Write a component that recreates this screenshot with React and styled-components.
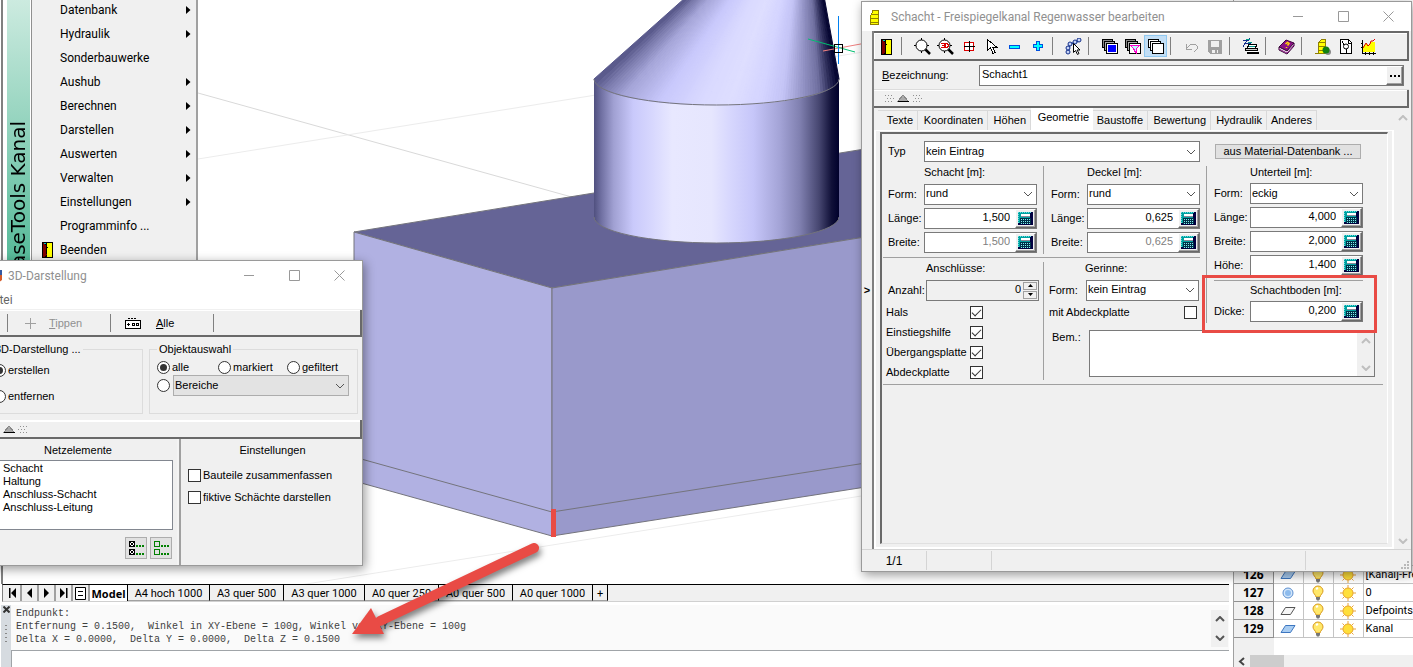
import React from "react";
import styled, { createGlobalStyle, css } from "styled-components";

const GlobalStyle = createGlobalStyle`
  *, *::before, *::after { box-sizing: border-box; }
  body { margin: 0; background: #fff; color: #000; font: 11px/13px Roboto, "Liberation Sans", sans-serif; }
  button, input, select, textarea { font: inherit; color: inherit; margin: 0; padding: 0; border-radius: 0; }
`;

const face = "#f0f0f0";
const dark = "#696969";
const edge = "#a0a0a0";
const red = "#e94b45";

/* ---------- desktop ---------- */

const Desktop = styled.div`
  position: relative;
  display: flex;
  min-height: 100vh;
  overflow: hidden;
  background: #fff;
`;

const Workspace = styled.main`
  flex: 1;
  min-width: 0;
  display: flex;
  flex-direction: column;
  padding-right: 4px;
`;

const Viewport = styled.div`
  position: relative;
  flex: 1;
  border-left: 2px solid #808080;
  margin-left: 1px;
`;

const SceneSvg = styled.svg`
  position: absolute;
  top: 0;
  left: -3px;
  width: calc(100% + 3px);
  height: 100%;
`;

const cylinderStops = [
  [0, "#50507f"], [3, "#7070a2"], [8, "#a0a0d2"], [16, "#c9c9fb"], [24, "#d8d8fe"],
  [32, "#e8e8ff"], [48, "#e6e6fe"], [55, "#d8d8fe"], [65, "#c6c6f9"], [76, "#a3a3d6"],
  [84, "#8080b0"], [92, "#45456f"], [97, "#101038"], [100, "#00002c"],
];

const coneStops = [
  [0, 85, 85, 135], [0.04, 120, 120, 170], [0.12, 165, 165, 216], [0.27, 200, 200, 252], [0.44, 218, 218, 255],
  [0.56, 222, 222, 255], [0.68, 212, 212, 255], [0.77, 196, 196, 246], [0.85, 150, 150, 200],
  [0.92, 112, 112, 160], [0.96, 50, 50, 95], [1, 0, 0, 44],
];

function coneColor(t) {
  const i = Math.max(1, coneStops.findIndex((s) => s[0] >= t));
  const [a, b] = [coneStops[i - 1], coneStops[i]];
  const k = (t - a[0]) / (b[0] - a[0]);
  const mix = (n) => Math.round(a[n] + (b[n] - a[n]) * k);
  return `rgb(${mix(1)},${mix(2)},${mix(3)})`;
}

const coneWedges = Array.from({ length: 96 }, (_, i) => {
  const point = (n) => {
    const x = 594 + (245 * n) / 96;
    const u = (x - 716.5) / 122.5;
    return [x, 79 + 26 * Math.sqrt(Math.max(0, 1 - u * u))];
  };
  const [a, b] = [point(i), point(i + 1)];
  return {
    points: `805,-109 ${a[0].toFixed(1)},${a[1].toFixed(1)} ${b[0].toFixed(1)},${b[1].toFixed(1)}`,
    color: coneColor((i + 0.5) / 96),
  };
});

function Scene() {
  return (
    <SceneSvg aria-label="3D-Ansicht Schacht">
      <defs>
        <linearGradient id="cylinder">
          {cylinderStops.map(([o, c]) => <stop key={o} offset={`${o}%`} stopColor={c} />)}
        </linearGradient>
      </defs>
      <g fill="none" stroke="#d9d9d9">
        <path d="M198 93L640 216" />
        <path d="M198 159L1000 30M300 585L1000 474" stroke="#ececec" />
      </g>
      <g stroke="#74747c">
        <path d="M354 232L1000 127V215L552 288Z" fill="#656496" />
        <path d="M354 232L552 288V536L354 481Z" fill="#b1b1e2" />
        <path d="M552 288L1000 215V466L552 536Z" fill="#9999cb" />
        <path d="M354 457L552 512L1000 442" fill="none" />
      </g>
      <path d="M594 79V217A122.500 26 0 0 0 839 217V79Z" fill="url(#cylinder)" />
      <path d="M594 217A122.500 26 0 0 0 839 217" fill="none" stroke="#74747c" />
      {coneWedges.map((w) => (
        <polygon key={w.points} points={w.points} fill={w.color} stroke={w.color} strokeWidth="1" />
      ))}
      <path d="M594 79A122.500 26 0 0 0 839 79" fill="none" stroke="#74747c" />
      <path d="M823 51L866 43" stroke="#f08080" />
      <path d="M808 39L855 52" stroke="#00c070" />
      <path d="M838.500 16V64" stroke="#0080f0" />
      <rect x="834.500" y="44.500" width="8" height="8" fill="none" stroke="#000" />
      <rect x="551" y="509" width="5" height="28" fill={red} />
    </SceneSvg>
  );
}

/* ---------- layout tabs and command line ---------- */

const SheetBar = styled.div`
  display: flex;
  height: 18px;
  margin: 0 0 3px 2px;
  padding-left: 2px;
  border-left: 1px solid #808080;
  border-top: 1px solid #000;
  border-bottom: 1px solid #d0d0d0;
  background: ${face};
`;

const SheetNav = styled.button`
  display: grid;
  place-items: center;
  width: 17px;
  border: 0;
  border-right: 2px solid ${edge};
  background: ${face};
`;

const SheetTab = styled.button`
  width: ${(p) => p.$w}px;
  padding-top: 2px;
  border: 0;
  border-right: 1px solid #000;
  border-bottom: 1px solid ${edge};
  background: ${face};
  text-align: center;
  white-space: nowrap;
  ${(p) => p.$active && css`padding: 0; background: #fff; border-bottom: 0; font: bold 11px/13px "Open Sans", sans-serif;`}
`;

const sheets = [
  ["A4 hoch 1000", 82], ["A3 quer 500", 74], ["A3 quer 1000", 81], ["A0 quer 250", 74],
  ["A0 quer 500", 74], ["A0 quer 1000", 80], ["+", 15],
];

const CommandArea = styled.section`
  display: flex;
  margin-left: 1px;
  background: #fafafa;
`;

const Grip = styled.div`
  display: flex;
  flex-direction: column;
  align-items: center;
  gap: 12px;
  width: 10px;
  padding-top: 1px;
  background: #d6dbe0;
`;

const CommandMain = styled.div`
  flex: 1;
  min-width: 0;
`;

const History = styled.div`
  display: flex;
  justify-content: space-between;
  height: 45px;
  padding: 2px 1px 0 5px;
`;

const Log = styled.pre`
  margin: 0;
  color: #404040;
  font: 10px/13px "Liberation Mono", monospace;
`;

const HistoryScroll = styled.div`
  display: flex;
  flex-direction: column;
  justify-content: space-between;
  align-items: center;
  width: 17px;
  height: 37px;
  margin-top: 3px;
  padding: 6px 0;
  background: ${face};
`;

const CommandInput = styled.input`
  display: block;
  width: 100%;
  height: 17px;
  border: 0;
  border-top: 1px solid #a0a4a8;
  border-left: 1px solid #a0a4a8;
  background: #fff;
`;

/* ---------- layer list ---------- */

const LayerPanel = styled.aside`
  display: flex;
  flex-direction: column;
  justify-content: flex-end;
  width: 180px;
  border-left: 1px solid ${edge};
  overflow: hidden;
`;

const LayerTable = styled.table`
  border-collapse: collapse;
  table-layout: fixed;
  width: 260px;
  td, th { height: 18px; padding: 0; border: 1px solid #c4c4c4; border-left: 0; vertical-align: middle; }
  th { width: 39px; background: ${face}; border-color: #909090; font: bold 12px/14px "Open Sans", sans-serif; text-align: center; }
  td { width: 30px; }
  td svg { display: block; margin: auto; }
  td:last-child { width: auto; padding-left: 2px; font-size: 11px; white-space: nowrap; }
`;

const LayerFoot = styled.div`
  width: 40px;
  height: 17px;
  background: ${face};
`;

const HScroll = styled.div`
  display: flex;
  align-items: center;
  height: 12px;
  padding-left: 4px;
  background: ${face};
`;

const HScrollThumb = styled.div`
  width: 34px;
  height: 12px;
  margin-left: 4px;
  background: #cdcdcd;
`;

const layers = [
  [126, "blue", "[Kanal]-Freispiegel"], [127, "dot", "0"], [128, "white", "Defpoints"], [129, "blue", "Kanal"],
];

const LayerMark = ({ kind }) => kind === "dot" ? (
  <svg width="16" height="16"><circle cx="8" cy="8" r="5" fill="#d3e6fa" stroke="#5b8fd0" /><circle cx="8" cy="8" r="3" fill="#8dbbed" /></svg>
) : (
  <svg width="16" height="14"><path d="M5.500 3.500H15L10.500 10.500H1Z" fill={kind === "blue" ? "#a9cdf2" : "#f6f6f6"} stroke={kind === "blue" ? "#3d76c0" : "#555"} /></svg>
);

const Bulb = () => (
  <svg width="14" height="16">
    <path d="M7 1a5 5 0 0 0-5 5c0 2.500 2.600 3.500 3 6h4c.400-2.500 3-3.500 3-6a5 5 0 0 0-5-5z" fill="#ffe86a" stroke="#d99a1c" />
    <path d="M5 4l2-1" stroke="#fff" strokeWidth="2" />
    <path d="M5 12h4v2l-1 1.500H6L5 14z" fill="#777" />
  </svg>
);

const Sun = () => (
  <svg width="16" height="16">
    <path d="M2.500 2.500l2 2M13.500 2.500l-2 2M2.500 13.500l2-2M13.500 13.500l-2-2M8 0v3M8 13v3M0 8h3M13 8h3" stroke="#e8a33a" />
    <circle cx="8" cy="8" r="5" fill="#ffdf3a" stroke="#e9a52a" />
  </svg>
);

/* ---------- application menu ---------- */

const AppMenu = styled.nav`
  position: absolute;
  top: -2px;
  left: 7px;
  display: flex;
  width: 191px;
  border-right: 2px solid ${edge};
  background: ${face};
`;

const MenuBanner = styled.div`
  position: relative;
  width: 25px;
  border-right: 1px solid #909090;
  box-shadow: inset -1px 0 #fff;
  background: linear-gradient(#cdebe0, #56ba99);
  overflow: hidden;
`;

const BannerText = styled.span`
  position: absolute;
  top: 123px;
  left: -1px;
  writing-mode: vertical-rl;
  transform: rotate(180deg);
  font: 20px/24px "DejaVu Sans", sans-serif;
  white-space: nowrap;
`;

const MenuList = styled.ul`
  flex: 1;
  margin: 0;
  padding: 0;
  list-style: none;
`;

const MenuItem = styled.button`
  display: grid;
  grid-template-columns: 28px 1fr 8px;
  align-items: center;
  width: 100%;
  height: 24px;
  padding: 0 4px 0 0;
  border: 0;
  background: none;
  font-size: 12px;
  line-height: 16px;
  text-align: left;
  svg { justify-self: center; }
  svg:first-child { justify-self: end; margin-right: 7px; }
`;

const menuItems = [
  ["Datenbank", 1], ["Hydraulik", 1], ["Sonderbauwerke", 0], ["Aushub", 1], ["Berechnen", 1], ["Darstellen", 1],
  ["Auswerten", 1], ["Verwalten", 1], ["Einstellungen", 1], ["Programminfo ...", 0], ["Beenden", 0],
];

const Door = ({ h = 16 }) => (
  <svg width="11" height={h} viewBox="0 0 11 16" shapeRendering="crispEdges">
    <path d="M0 0H11V16H0Z" fill="#000" />
    <path d="M5 1H10V15H5Z" fill="#ff0" />
    <path d="M1 1L5 5V12L3 15H1Z" fill="#800000" />
    <path d="M2 1h2v1H2z" fill="#0cc" />
    <path d="M4 3h1v9H4zM5 5h1v1H5z" fill="#000" />
  </svg>
);

/* ---------- windows ---------- */

const windowShell = css`
  position: absolute;
  display: flex;
  flex-direction: column;
  border: 1px solid #9a9a9a;
  background: ${face};
  box-shadow: 2px 3px 10px rgba(0, 0, 0, 0.4);
  font-family: "Liberation Sans", Arial, sans-serif;
`;

const TitleBar = styled.header`
  display: flex;
  align-items: center;
  height: ${(p) => p.$h}px;
  background: #fff;
  color: #909090;
  font: 12px/16px Roboto, sans-serif;
`;

const WindowTitle = styled.h1`
  flex: 1;
  margin: 0 0 0 ${(p) => p.$gap}px;
  font: inherit;
  white-space: nowrap;
`;

const WindowButton = styled.button`
  display: grid;
  place-items: center;
  width: 45px;
  height: 28px;
  border: 0;
  background: none;
`;

const WindowButtons = () => (
  <>
    <WindowButton aria-label="Minimieren"><svg width="11" height="11"><path d="M0 5.500H10" stroke="#999" /></svg></WindowButton>
    <WindowButton aria-label="Maximieren"><svg width="11" height="11"><path d="M.5 .5H10.500V10.500H.5Z" fill="none" stroke="#999" /></svg></WindowButton>
    <WindowButton aria-label="Schließen"><svg width="11" height="11"><path d="M.5 .5L10.500 10.500M10.500 .5L.5 10.500" stroke="#999" /></svg></WindowButton>
  </>
);

const Check = styled.input.attrs({ type: "checkbox" })`
  appearance: none;
  flex: none;
  display: block;
  width: 13px;
  height: 13px;
  border: 1px solid #333;
  background: #fff;
  &:checked::after {
    content: "";
    display: block;
    width: 9px;
    height: 5px;
    margin: 2px 0 0 1px;
    border: solid #333;
    border-width: 0 0 1px 1px;
    transform: rotate(-45deg);
  }
`;

const Radio = styled.input.attrs({ type: "radio" })`
  appearance: none;
  flex: none;
  display: grid;
  place-items: center;
  width: 13px;
  height: 13px;
  border: 1px solid #333;
  border-radius: 50%;
  background: #fff;
  &:checked::after { content: ""; width: 7px; height: 7px; border-radius: 50%; background: #333; }
`;

const SelectBox = styled.span`
  display: grid;
  align-items: center;
  width: ${(p) => (p.$w ? `${p.$w}px` : "100%")};
  > * { grid-area: 1 / 1; }
  svg { justify-self: end; margin-right: 4px; pointer-events: none; }
`;

const SelectInput = styled.select`
  appearance: none;
  width: 100%;
  height: 21px;
  padding: 0 2px ${(p) => (p.$muted ? 0 : 1)}px 1px;
  border: 1px solid ${(p) => (p.$muted ? "#adadad" : "#7a7a7a")};
  background: ${(p) => (p.$muted ? "#e3e3e3" : "#fff")};
`;

const Chevron = ({ up, color = "#555", wide }) => (
  <svg width="10" height="6"><path d={up ? "M1 5L5 1L9 5" : "M1 1L5 5L9 1"} fill="none" stroke={color} strokeWidth={wide ? 2 : 1} /></svg>
);

function Select({ id, label, value, w, muted }) {
  return (
    <SelectBox $w={w}>
      <SelectInput id={id} aria-label={label} $muted={muted} defaultValue={value}><option>{value}</option></SelectInput>
      <Chevron />
    </SelectBox>
  );
}

/* ---------- 3D-Darstellung ---------- */

const ViewWindow = styled.section`
  ${windowShell}
  top: 260px;
  left: -30px;
  width: 393px;
  height: 306px;
  font-size: 11px;
  ${TitleBar} { padding-left: 16px; }
`;

const MenuBar = styled.div`
  display: flex;
  height: 19px;
  padding-left: 14px;
  background: #fff;
  button { border: 0; background: none; color: #666; font: 12px/16px Roboto, sans-serif; }
`;

const ViewTools = styled.div`
  display: flex;
  align-items: center;
  height: 27px;
  margin-top: 1px;
  padding: 1px 0 0 36px;
  border: solid ${dark};
  border-width: 0 2px 2px 0;
  box-shadow: inset 0 1px #fff;
`;

const ViewTool = styled.button`
  display: flex;
  align-items: center;
  gap: ${(p) => p.$gap}px;
  width: 103px;
  height: 18px;
  padding-left: ${(p) => p.$pad}px;
  border: 0;
  border-left: 1px solid #808080;
  background: none;
  color: ${(p) => (p.disabled ? "#909090" : "#000")};
`;

const ToolEnd = styled.span`
  width: 1px;
  height: 18px;
  background: #808080;
`;

const Groups = styled.div`
  display: flex;
  gap: 6px;
  height: 83px;
  padding: 6px 4px 0 5px;
`;

const Group = styled.fieldset`
  display: flex;
  flex-direction: column;
  margin: 0;
  padding: 4px 7px 0;
  border: 1px solid #dcdcdc;
  min-width: 0;
  width: ${(p) => (p.$w ? `${p.$w}px` : "auto")};
  flex: ${(p) => (p.$w ? "none" : 1)};
  height: 71px;
  legend { margin-left: ${(p) => p.$legend || 0}px; padding: 0 2px; white-space: nowrap; }
`;

const Choice = styled.label`
  display: flex;
  align-items: center;
  gap: 2px;
  height: ${(p) => p.$h || 15}px;
  width: ${(p) => (p.$w ? `${p.$w}px` : "auto")};
  padding-left: ${(p) => p.$indent || 0}px;
  white-space: nowrap;
`;

const ChoiceRow = styled.div`
  display: flex;
  align-items: center;
  gap: 3px;
`;

const ViewStrip = styled.div`
  display: flex;
  align-items: center;
  height: 19px;
  padding-left: 29px;
  border: solid ${dark};
  border-width: 0 2px 2px 0;
  box-shadow: inset 0 2px #fff;
`;

const ViewLower = styled.div`
  display: flex;
  flex: 1;
`;

const ViewPane = styled.div`
  width: ${(p) => (p.$w ? `${p.$w}px` : "auto")};
  flex: ${(p) => (p.$w ? "none" : 1)};
  padding: ${(p) => p.$pad};
  border-left: ${(p) => (p.$w ? "0" : "4px ridge #f4f4f4")};
  h2 { margin: 0 0 3px; font: inherit; text-align: center; }
`;

const ElementList = styled.select`
  display: block;
  width: 100%;
  height: 70px;
  padding: 1px 0;
  border: 1px solid #828790;
  background: #fff;
  overflow: hidden;
  option { min-height: 13px; padding: 0 0 0 19px; font-size: 11px; line-height: 13px; }
`;

const ListButtons = styled.div`
  display: flex;
  justify-content: flex-end;
  gap: 3px;
  padding: 7px 1px 0 0;
`;

const SmallButton = styled.button`
  display: grid;
  place-items: center;
  width: 22px;
  height: 22px;
  border: 1px solid #adadad;
  background: #e1e1e1;
`;

const ListIcon = ({ filled }) => (
  <svg width="15" height="14" shapeRendering="crispEdges">
    {[0, 8].map((y) => (
      <g key={y}>
        <path d={`M.5 ${y + 0.5}h5v5h-5z`} fill={filled ? "#fff" : "none"} stroke={filled ? "#000" : "#008000"} />
        {filled && <path d={`M2 ${y + 2}h2v2h-2z`} fill="#060" />}
        {filled && <path d={`M1 ${y + 1}l4 4M5 ${y + 1}l-4 4`} stroke="#000" />}
        <path d={`M7 ${y + 4}h2v2h-2zM10 ${y + 4}h2v2h-2zM13 ${y + 4}h2v2h-2z`} fill="#008000" />
      </g>
    ))}
  </svg>
);

const GripArrow = ({ left }) => (
  <svg width={left ? 38 : 28} height="8" shapeRendering="crispEdges">
    {left && <path d="M1 1.500h8M3 4.500h8M1 7h8" stroke="#909090" strokeDasharray="1 2" />}
    <path d={left ? "M14 7L19 1L24 7Z" : "M4 7L9 1L14 7Z"} fill="#aaa" stroke="#888" />
    <path d={left ? "M14 7.500h11" : "M4 7.500h11"} stroke="#000" />
    <path d={left ? "M29 1.500h8M31 4.500h8M29 7h8" : "M20 1.500h8M18 4.500h8M20 7h8"} stroke="#909090" strokeDasharray="1 2" />
  </svg>
);

function ViewDialog() {
  return (
    <ViewWindow>
      <TitleBar $h={29}>
        <svg width="15" height="14"><path d="M1 3h8v8H1z" fill="#f0a060" /><path d="M8 1h7v6H8z" fill="#456" /><path d="M10 8l5-3v6l-4 3z" fill="#d45a28" /><path d="M13 1h2v5h-2z" fill="#3458a0" /></svg>
        <WindowTitle $gap={6}>3D-Darstellung</WindowTitle>
        <WindowButtons />
      </TitleBar>
      <MenuBar><button>Datei</button></MenuBar>
      <ViewTools>
        <ViewTool disabled $pad={17} $gap={13}>
          <svg width="11" height="11"><path d="M5.500 0V11M0 5.500H11" stroke="#a0a0a0" /></svg>
          <span><u>T</u>ippen</span>
        </ViewTool>
        <ViewTool $pad={14} $gap={15}>
          <svg width="16" height="11" shapeRendering="crispEdges">
            <path d="M.5 2.500h15v8H.5z" fill="#fff" stroke="#000" /><path d="M3 .5h9" stroke="#000" strokeDasharray="2 1" />
            <path d="M3 5h1v3H3zM2 6h3v1H2z" /><path d="M7.500 5.500h2v2h-2zM11.500 5.500h2v2h-2z" fill="none" stroke="#000" />
          </svg>
          <span><u>A</u>lle</span>
        </ViewTool>
        <ToolEnd />
      </ViewTools>
      <Groups>
        <Group $w={167} $legend={9}>
          <legend>3D-Darstellung ...</legend>
          <Choice $h={21} $indent={9}><Radio name="mode" defaultChecked />erstellen</Choice>
          <Choice $h={33} $indent={9}><Radio name="mode" />entfernen</Choice>
        </Group>
        <Group>
          <legend>Objektauswahl</legend>
          <ChoiceRow>
            <Choice $w={58}><Radio name="objects" defaultChecked />alle</Choice>
            <Choice $w={66}><Radio name="objects" />markiert</Choice>
            <Choice><Radio name="objects" />gefiltert</Choice>
          </ChoiceRow>
          <ChoiceRow>
            <Radio name="objects" aria-label="Bereiche" />
            <Select label="Bereiche auswählen" value="Bereiche" w={176} muted />
          </ChoiceRow>
        </Group>
      </Groups>
      <ViewStrip><GripArrow /></ViewStrip>
      <ViewLower>
        <ViewPane $w={206} $pad="5px 4px 0 12px">
          <h2>Netzelemente</h2>
          <ElementList multiple size={5} aria-label="Netzelemente">
            <option>Schacht</option>
            <option>Haltung</option>
            <option>Anschluss-Schacht</option>
            <option>Anschluss-Leitung</option>
          </ElementList>
          <ListButtons>
            <SmallButton aria-label="Alle wählen"><ListIcon filled /></SmallButton>
            <SmallButton aria-label="Keine wählen"><ListIcon /></SmallButton>
          </ListButtons>
        </ViewPane>
        <ViewPane $pad="5px 5px 0 7px">
          <h2>Einstellungen</h2>
          <Choice $h={30}><Check />Bauteile zusammenfassen</Choice>
          <Choice><Check />fiktive Schächte darstellen</Choice>
        </ViewPane>
      </ViewLower>
    </ViewWindow>
  );
}

/* ---------- Schacht bearbeiten ---------- */

const ShaftWindow = styled.section`
  ${windowShell}
  top: 1px;
  right: 1px;
  width: 551px;
  ${TitleBar} { padding-left: 8px; }
`;

const ShaftBody = styled.div`
  display: flex;
`;

const Collapse = styled.button`
  width: 10px;
  border: 0;
  background: ${face};
  font-weight: bold;
`;

const ShaftMain = styled.div`
  flex: 1;
  min-width: 0;
  border-left: 2px solid #808080;
`;

const Toolbar = styled.div`
  display: flex;
  align-items: center;
  height: 30px;
  margin-right: 2px;
  padding-left: 1px;
  border: solid ${dark};
  border-width: 2px 2px 2px 0;
  box-shadow: inset 1px 1px #fff;
`;

const ToolButton = styled.button`
  display: grid;
  place-items: center;
  width: 23px;
  height: 22px;
  border: 1px solid ${(p) => (p.$on ? "#90c8f0" : "transparent")};
  background: ${(p) => (p.$on ? "#c2def5" : "none")};
`;

const Divider = styled.span`
  width: 1px;
  height: 18px;
  margin: 0 9px 0 3px;
  background: #808080;
`;

const NameRow = styled.div`
  display: flex;
  align-items: center;
  height: 29px;
  padding: 0 7px 0 8px;
  label { width: 97px; }
`;

const NameField = styled.div`
  display: flex;
  flex: 1;
  height: 21px;
  border: 1px solid #7a7a7a;
  background: #fff;
  input { flex: 1; min-width: 0; padding: 0 2px 2px; border: 0; background: none; }
`;

const RaisedButton = styled.button`
  display: grid;
  place-items: center;
  width: ${(p) => p.$w}px;
  height: 19px;
  border: 1px solid;
  border-color: #fff #696969 #696969 #fff;
  box-shadow: inset -1px -1px ${edge};
  background: ${face};
`;

const ShaftStrip = styled.div`
  display: flex;
  align-items: center;
  height: 18px;
  margin-right: 2px;
  padding-left: 10px;
  border: solid ${dark};
  border-width: 0 2px 2px 0;
  box-shadow: inset 0 1px #fff, 0 -1px #dcdcdc;
`;

const TabArea = styled.div`
  display: flex;
`;

const TabColumn = styled.div`
  flex: 1;
  min-width: 0;
`;

const TabList = styled.div`
  display: flex;
  align-items: flex-end;
  height: 22px;
  padding-left: 4px;
`;

const Tab = styled.button`
  width: ${(p) => p.$w}px;
  height: ${(p) => (p.$on ? 22 : 20)}px;
  padding: ${(p) => (p.$on ? "0 4px 3px 0" : "0 4px 0 0")};
  border: solid #d9d9d9;
  border-width: ${(p) => (p.$on ? "0" : "1px 1px 0 0")};
  background: ${(p) => (p.$on ? "#fff" : face)};
  text-align: right;
`;

const TabFrame = styled.div`
  padding: 1px 4px 3px;
  border: solid #fff;
  border-width: 1px 2px 2px;
  box-shadow: 0 1px #d9d9d9;
`;

const TabPage = styled.div`
  height: 412px;
  padding: 6px 4px 0 1px;
  border: solid;
  border-width: 2px 1px 1px 2px;
  border-color: ${dark} #fff #e0e0e0 ${dark};
`;

const FormGrid = styled.div`
  position: relative;
  display: grid;
  grid-template-columns: 160px 163px 1fr;
  grid-template-rows: 26px 92px 69px 57px;
  border-bottom: 1px solid ${edge};
`;

const Cell = styled.div`
  display: flex;
  flex-direction: column;
  grid-area: ${(p) => p.$area};
  padding: ${(p) => p.$pad || "0 6px 0 5px"};
  margin: ${(p) => p.$margin || 0};
  border: 0 solid ${edge};
  border-left-width: ${(p) => (p.$line ? 1 : 0)}px;
`;

const Rule = styled.hr`
  grid-area: ${(p) => p.$area};
  align-self: ${(p) => (p.$area ? "end" : "stretch")};
  height: 1px;
  margin: ${(p) => p.$margin || 0};
  border: 0;
  background: ${edge};
`;

const GroupTitle = styled.h3`
  height: ${(p) => p.$h || 16}px;
  margin: 0 0 0 ${(p) => (p.$indent === undefined ? 36 : p.$indent)}px;
  font: inherit;
  line-height: 13px;
`;

const Field = styled.div`
  display: flex;
  align-items: center;
  justify-content: space-between;
  height: 24px;
  label { white-space: nowrap; }
`;

const CalcBox = styled.span`
  display: flex;
  width: 113px;
  height: 21px;
  border: 1px solid #7a7a7a;
  background: #fff;
  input {
    flex: 1;
    min-width: 0;
    padding: 0 5px 2px 0;
    border: 0;
    background: none;
    color: ${(p) => (p.$muted ? "#808080" : "#000")};
    text-align: right;
  }
`;

const CalcIcon = () => (
  <svg width="15" height="13" shapeRendering="crispEdges">
    <path d="M0 0H15V13H0Z" fill="#000040" /><path d="M0 0H12V11H0Z" fill="#00a0a0" />
    <path d="M0 .5H13M.5 0V11" stroke="#60e0e0" strokeDasharray="1 1" />
    <path d="M3 2h9v3H3z" fill="#fff" /><path d="M3 4h9v1H3z" fill="#889" />
    <path d="M2 6h11v6H2z" fill="#003048" />
    <path d="M3 7.500h9M3 9.500h9M3 11.500h9" stroke="#80f0f0" strokeDasharray="1 1" />
  </svg>
);

function CalcField({ id, label, value, muted }) {
  return (
    <Field>
      <label htmlFor={id}>{label}</label>
      <CalcBox $muted={muted}>
        <input id={id} defaultValue={value} />
        <RaisedButton $w={21} aria-label={`${label} berechnen`}><CalcIcon /></RaisedButton>
      </CalcBox>
    </Field>
  );
}

function SelectField({ id, label, value }) {
  return (
    <Field>
      <label htmlFor={id}>{label}</label>
      <Select id={id} value={value} w={113} />
    </Field>
  );
}

const TypeRow = styled.div`
  display: grid;
  grid-area: 1 / 1 / 2 / 3;
  grid-template-columns: 36px 276px;
  align-items: center;
  height: 21px;
  margin-top: 1px;
  padding-left: 5px;
`;

const DatabaseButton = styled.button`
  grid-area: 1 / 3;
  width: 146px;
  height: 15px;
  margin: 4px 0 0 9px;
  border: 1px solid #adadad;
  background: #e1e1e1;
  line-height: 13px;
`;

const Spinner = styled.span`
  display: flex;
  width: 113px;
  height: 21px;
  padding: 1px;
  border: 1px solid #7a7a7a;
  input { flex: 1; min-width: 0; padding: 0 2px 2px; border: 0; background: none; text-align: right; }
`;

const SpinButtons = styled.span`
  display: grid;
  gap: 1px;
  width: 14px;
  button { display: grid; place-items: center; border: 1px solid ${edge}; background: ${face}; }
`;

const FlagRow = styled.label`
  display: flex;
  align-items: center;
  justify-content: space-between;
  width: ${(p) => p.$w}px;
  height: 20px;
  white-space: nowrap;
`;

const Flags = styled.div`
  margin-left: -2px;
`;

const Remark = styled.div`
  display: flex;
  grid-area: 4 / 2 / 5 / 4;
  gap: 9px;
  padding: 3px 8px 0 8px;
  margin-bottom: 4px;
  border-left: 1px solid ${edge};
  label { width: 28px; padding-top: 1px; }
`;

const RemarkBox = styled.div`
  display: flex;
  flex: 1;
  height: 47px;
  border: 1px solid #7a7a7a;
  background: #fff;
  textarea { flex: 1; min-width: 0; border: 0; resize: none; background: none; outline: 0; }
`;

const ScrollTrack = styled.div`
  display: flex;
  flex-direction: column;
  justify-content: space-between;
  align-items: center;
  width: 17px;
  padding: 7px 0 5px;
  background: ${face};
`;

const Highlight = styled.div`
  position: absolute;
  top: 135px;
  right: 6px;
  width: 175px;
  height: 58px;
  border: 3px solid ${red};
`;

const StatusBar = styled.footer`
  display: flex;
  height: 22px;
  border-top: 1px solid #d4d4d4;
  font-size: 12px;
  line-height: 20px;
`;

const StatusCell = styled.span`
  width: ${(p) => (p.$w ? `${p.$w}px` : "auto")};
  flex: ${(p) => (p.$w ? "none" : 1)};
  margin: 1px 0;
  border-right: 1px solid #d4d4d4;
  text-align: center;
`;

const SizeGrip = styled.span`
  display: grid;
  width: 105px;
  place-items: end;
  padding: 0 2px 2px 0;
`;

const px = { width: 17, height: 17, viewBox: "0 0 17 17", shapeRendering: "crispEdges" };

const Lens = ({ three }) => (
  <svg {...px}>
    <path d="M11 11l5 5" stroke="#000" strokeWidth="2.500" shapeRendering="auto" />
    <circle cx="7.500" cy="7.500" r="5.500" fill="#fff" stroke="#000" shapeRendering="auto" />
    <path d="M7.500 0v2M7.500 13v2M0 7.500h2M13 7.500h2" stroke="#000" />
    {three && <path d="M4 5.500h3v4H4M5 7.500h2M8.500 5v5M8 5.500h2l1 1v2l-1 1H8" stroke="#d00" fill="none" />}
  </svg>
);

const Frame = () => (
  <svg {...px}><path d="M4.500 4.500h9v8h-9z" fill="#fff" stroke="#d00" /><path d="M6 6.500h6M6 10.500h6" stroke="#fff" /><path d="M9 3v11M4 8.500h11" stroke="#000" /></svg>
);

const Cursor = () => (
  <svg {...px}><path d="M4.500 1.500v11l3-3 2.500 6 2-1-2.500-5.500h4z" fill="#fff" stroke="#000" /></svg>
);

const Sign = ({ plus }) => (
  <svg {...px}><path d={plus ? "M7.500 3.500h3v3h3v3h-3v3h-3v-3h-3v-3h3z" : "M3.500 7.500h10v3h-10z"} fill="#0ff" stroke="#0050e0" /></svg>
);

const Tree = () => (
  <svg {...px} shapeRendering="auto">
    <path d="M3 14L5 6L14 3" stroke="#123f9c" fill="none" strokeWidth="1.500" />
    {[[3, 14], [3, 10], [5, 6], [10, 4], [14, 2]].map(([x, y]) => <circle key={`${x}-${y}`} cx={x} cy={y} r="2" fill="#c5d4f8" stroke="#102c88" />)}
    <path d="M8.500 5.500v9l2-2 2 4 1.500-1-2-3.500h3z" fill="#fff" stroke="#000" />
  </svg>
);

const Stack = ({ kind }) => (
  <svg {...px}>
    <path d="M1.500 1.500h10v8h-10z" fill={kind === "plain" ? "#fff" : "#888"} stroke="#000" />
    <path d="M3.500 3.500h10v9h-10z" fill={kind === "plain" ? "#fff" : "#aaa"} stroke="#000" />
    <path d="M5.500 5.500h11v10h-11z" fill="#fff" stroke="#000" />
    {kind === "blue" && <path d="M7 7h8v7H7z" fill="#00f" />}
    {kind === "filter" && <path d="M7 7.500h8l-3 4v3l-2-2v-1z" fill="#bff" stroke="#f0c" />}
  </svg>
);

const Undo = () => (
  <svg {...px}><path d="M3.500 6v5h5M4 10l4-4h4l2 2v3l-3 3" fill="none" stroke="#a0a0a0" /></svg>
);

const Disk = () => (
  <svg {...px}><path d="M2 2h14v14H4l-2-2z" fill="#a0a0a0" /><path d="M5 3h8v6H5zM6 12h6v3H6z" fill="#f0f0f0" /><path d="M9 12h2v3H9z" fill="#a0a0a0" /></svg>
);

const Printer = () => (
  <svg {...px}>
    <path d="M1 2.500h5l2-2M3 5.500h6M1 8.500l4-6" stroke="#14308c" fill="none" /><path d="M4 1.500h4M6 4.500h4" stroke="#098" />
    <path d="M6.500 6.500h8l-1 4h-8z" fill="#fff" stroke="#000" /><path d="M7 8.500h6" stroke="#098" />
    <path d="M3.500 10.500h12v2h-12z" fill="#ccc" stroke="#000" /><path d="M4.500 14.500h12" stroke="#000" strokeWidth="2" /><path d="M5 13.500h10" stroke="#fff" />
  </svg>
);

const Book = () => (
  <svg {...px} shapeRendering="auto">
    <path d="M1 9L8 2L16 5L9 13Z" fill="#8c1085" stroke="#400040" /><path d="M1 9v3l8 4 7-8V5L9 13z" fill="#fff" stroke="#300030" />
    <path d="M1 11l8 4 7-8" fill="none" stroke="#8c1085" /><path d="M7.500 6l2-1.500 1.500 1-1.500 2M8.500 9v1" stroke="#fd0" fill="none" strokeWidth="1.500" />
  </svg>
);

const Manhole = () => (
  <svg {...px}>
    <path d="M4.500 15.500v-11l3-3h4v14z" fill="#ff0" stroke="#908000" /><path d="M1 15.500h12M5 4.500h6M5 8.500h6M5 12.500h6" stroke="#908000" />
    <circle cx="14" cy="14" r="3" fill="#888" shapeRendering="auto" />
    <circle cx="12" cy="12" r="3.500" fill="#108010" shapeRendering="auto" />
  </svg>
);

const Sheet = () => (
  <svg {...px}><path d="M3.500 1.500h8l3 3v11h-11z" fill="#fff" stroke="#000" /><path d="M11 2v3h3" stroke="#000" fill="none" /><path d="M5 3l2 4M9 10v5M12 5l-2 2" stroke="#000" /><circle cx="9" cy="8.500" r="2.500" fill="#fff" stroke="#000" shapeRendering="auto" /></svg>
);

const Graph = () => (
  <svg {...px}><path d="M3 14V9l3-4 3 3 2-4h4v10z" fill="#ff0" /><path d="M3 10l3-5 2 3 2-2 1-3h2l2-2" stroke="#d00" fill="none" shapeRendering="auto" /><path d="M2.500 2v13.500H16M5.500 14v3M9.500 14v3M13.500 14v3M1 5.500h2M1 9.500h2" stroke="#000" fill="none" /></svg>
);

const tools = [
  ["Beenden", <Door h={17} />], null,
  ["Zoom", <Lens />], ["3D-Zoom", <Lens three />], ["Rahmen", <Frame />], ["Auswahl", <Cursor />], ["Entfernen", <Sign />], ["Hinzufügen", <Sign plus />], null,
  ["Netz wählen", <Tree />], null,
  ["Stapel", <Stack kind="blue" />], ["Stapel filtern", <Stack kind="filter" />], ["Alle Blätter", <Stack kind="plain" />, true], null,
  ["Rückgängig", <Undo />], ["Speichern", <Disk />], null,
  ["Drucken", <Printer />], null,
  ["Hilfe", <Book />], null,
  ["Schacht", <Manhole />], ["Blatt", <Sheet />], ["Diagramm", <Graph />],
];

const tabs = [
  ["Texte", 40], ["Koordinaten", 70], ["Höhen", 43], ["Geometrie", 62], ["Baustoffe", 55], ["Bewertung", 63], ["Hydraulik", 56], ["Anderes", 50],
];

function ShaftDialog() {
  return (
    <ShaftWindow>
      <TitleBar $h={29}>
        <svg width="10" height="16" shapeRendering="crispEdges">
          <path d="M.5 15.500V7L3 1.500h5.500v14z" fill="#ff0" stroke="#908000" /><path d="M1 5.500h8M1 9.500h8M0 13.500h9" stroke="#908000" />
        </svg>
        <WindowTitle $gap={11}>Schacht - Freispiegelkanal Regenwasser bearbeiten</WindowTitle>
        <WindowButtons />
      </TitleBar>
      <ShaftBody>
        <Collapse aria-label="Seitenleiste öffnen">&gt;</Collapse>
        <ShaftMain>
          <Toolbar>
            {tools.map((t, i) => t
              ? <ToolButton key={t[0]} aria-label={t[0]} $on={t[2]}>{t[1]}</ToolButton>
              : <Divider key={`divider-${i}`} />)}
          </Toolbar>
          <NameRow>
            <label htmlFor="name"><u>B</u>ezeichnung:</label>
            <NameField>
              <input id="name" defaultValue="Schacht1" />
              <RaisedButton $w={17} aria-label="Auswählen"><svg width="10" height="2"><path d="M0 0h2v2H0zM4 0h2v2H4zM8 0h2v2H8z" /></svg></RaisedButton>
            </NameField>
          </NameRow>
          <ShaftStrip><GripArrow left /></ShaftStrip>
          <TabArea>
            <TabColumn>
              <TabList role="tablist">
                {tabs.map(([name, w]) => (
                  <Tab key={name} role="tab" $w={w} $on={name === "Geometrie"} aria-selected={name === "Geometrie"}>{name}</Tab>
                ))}
              </TabList>
              <TabFrame>
                <TabPage>
                  <FormGrid>
                    <TypeRow>
                      <label htmlFor="type">Typ</label>
                      <Select id="type" value="kein Eintrag" />
                    </TypeRow>
                    <DatabaseButton>aus Material-Datenbank ...</DatabaseButton>

                    <Cell $area="2 / 1">
                      <GroupTitle>Schacht [m]:</GroupTitle>
                      <SelectField id="s-form" label="Form:" value="rund" />
                      <CalcField id="s-length" label="Länge:" value="1,500" />
                      <CalcField id="s-width" label="Breite:" value="1,500" muted />
                    </Cell>
                    <Cell $area="2 / 2" $line $margin="0 0 4px" $pad="0 6px 0 7px">
                      <GroupTitle>Deckel [m]:</GroupTitle>
                      <SelectField id="d-form" label="Form:" value="rund" />
                      <CalcField id="d-length" label="Länge:" value="0,625" />
                      <CalcField id="d-width" label="Breite:" value="0,625" muted />
                    </Cell>
                    <Rule $area="2 / 1 / 3 / 3" $margin="0 6px 0 0" />

                    <Cell $area="2 / 3 / 4 / 4" $line $margin="0 0 4px" $pad="0 20px 0 7px">
                      <GroupTitle>Unterteil [m]:</GroupTitle>
                      <SelectField id="u-form" label="Form:" value="eckig" />
                      <CalcField id="u-length" label="Länge:" value="4,000" />
                      <CalcField id="u-width" label="Breite:" value="2,000" />
                      <CalcField id="u-height" label="Höhe:" value="1,400" />
                      <Rule $margin="3px 0 3px" />
                      <GroupTitle $h={15}>Schachtboden [m]:</GroupTitle>
                      <CalcField id="u-floor" label="Dicke:" value="0,200" />
                    </Cell>

                    <Cell $area="3 / 1 / 5 / 2" $pad="4px 4px 0 5px">
                      <GroupTitle $indent={38}>Anschlüsse:</GroupTitle>
                      <Field>
                        <label htmlFor="count">Anzahl:</label>
                        <Spinner>
                          <input id="count" defaultValue="0" />
                          <SpinButtons>
                            <button aria-label="Mehr"><svg width="5" height="3"><path d="M0 3L2.500 0L5 3z" /></svg></button>
                            <button aria-label="Weniger"><svg width="5" height="3"><path d="M0 0L2.500 3L5 0z" /></svg></button>
                          </SpinButtons>
                        </Spinner>
                      </Field>
                      <Flags>
                        {["Hals", "Einstiegshilfe", "Übergangsplatte", "Abdeckplatte"].map((name) => (
                          <FlagRow key={name} $w={97}>{name}<Check defaultChecked /></FlagRow>
                        ))}
                      </Flags>
                    </Cell>
                    <Cell $area="3 / 2" $line $margin="4px 0 0" $pad="0 7px 0 5px">
                      <GroupTitle>Gerinne:</GroupTitle>
                      <SelectField id="g-form" label="Form:" value="kein Eintrag" />
                      <FlagRow $w={148}>mit Abdeckplatte<Check /></FlagRow>
                    </Cell>
                    <Remark>
                      <label htmlFor="remark">Bem.:</label>
                      <RemarkBox>
                        <textarea id="remark" />
                        <ScrollTrack><Chevron up wide color="#bfbfbf" /><Chevron wide color="#bfbfbf" /></ScrollTrack>
                      </RemarkBox>
                    </Remark>
                    <Highlight />
                  </FormGrid>
                </TabPage>
              </TabFrame>
            </TabColumn>
            <ScrollTrack><Chevron up wide color="#bfbfbf" /><Chevron wide color="#bfbfbf" /></ScrollTrack>
          </TabArea>
        </ShaftMain>
      </ShaftBody>
      <StatusBar>
        <StatusCell $w={65}>1/1</StatusCell>
        <StatusCell $w={65} />
        <StatusCell />
        <SizeGrip><svg width="8" height="8"><path d="M6 0h2v2H6zM3 3h2v2H3zM6 3h2v2H6zM0 6h2v2H0zM3 6h2v2H3zM6 6h2v2H6z" fill="#b8b8b8" /></svg></SizeGrip>
      </StatusBar>
    </ShaftWindow>
  );
}

const ArrowSvg = styled.svg`
  position: absolute;
  inset: 0;
  width: 100%;
  height: 100%;
  pointer-events: none;
  filter: drop-shadow(2px 4px 3px rgba(0, 0, 0, 0.5));
`;

const NavIcon = ({ d }) => <svg width="9" height="10"><path d={d} /></svg>;

export default function App() {
  return (
    <Desktop>
      <GlobalStyle />
      <Workspace>
        <Viewport><Scene /></Viewport>
        <SheetBar>
          <SheetNav aria-label="Erstes Blatt"><NavIcon d="M1 0h1.500v10H1zM8 0v10L3 5z" /></SheetNav>
          <SheetNav aria-label="Vorheriges Blatt"><NavIcon d="M7 0v10L2 5z" /></SheetNav>
          <SheetNav aria-label="Nächstes Blatt"><NavIcon d="M2 0v10l5-5z" /></SheetNav>
          <SheetNav aria-label="Letztes Blatt"><NavIcon d="M7 0h1.500v10H7zM1 0v10l5-5z" /></SheetNav>
          <SheetNav aria-label="Blattliste"><svg width="11" height="13"><path d="M.5 .5h10v12H.5zM3 4.500h5M3 8.500h5" fill="#fff" stroke="#000" /></svg></SheetNav>
          <SheetTab $w={38} $active>Model</SheetTab>
          {sheets.map(([name, w]) => <SheetTab key={name} $w={w}>{name}</SheetTab>)}
        </SheetBar>
        <CommandArea>
          <Grip>
            <svg width="7" height="7"><path d="M.5 .5l6 6M6.500 .5l-6 6" stroke="#333" strokeWidth="2" /></svg>
            <svg width="2" height="20"><path d="M1 0v20" stroke="#888" strokeWidth="2" strokeDasharray="1 3" /></svg>
          </Grip>
          <CommandMain>
            <History>
              <Log>{"Endpunkt:\nEntfernung = 0.1500,  Winkel in XY-Ebene = 100g, Winkel von XY-Ebene = 100g\nDelta X = 0.0000,  Delta Y = 0.0000,  Delta Z = 0.1500"}</Log>
              <HistoryScroll><Chevron up wide /><Chevron wide /></HistoryScroll>
            </History>
            <CommandInput aria-label="Befehlszeile" />
          </CommandMain>
        </CommandArea>
      </Workspace>
      <LayerPanel>
        <LayerTable>
          <tbody>
            {layers.map(([n, kind, name]) => (
              <tr key={n}><th scope="row">{n}</th><td><LayerMark kind={kind} /></td><td><Bulb /></td><td><Sun /></td><td>{name}</td></tr>
            ))}
          </tbody>
        </LayerTable>
        <LayerFoot />
        <HScroll>
          <svg width="8" height="9"><path d="M6 1L2 4.500L6 8" fill="none" stroke="#444" strokeWidth="2" /></svg>
          <HScrollThumb />
        </HScroll>
      </LayerPanel>
      <AppMenu>
        <MenuBanner><BannerText>BaseTools Kanal</BannerText></MenuBanner>
        <MenuList>
          {menuItems.map(([name, sub]) => (
            <li key={name}>
              <MenuItem>
                {name === "Beenden" ? <Door /> : <span />}
                <span>{name}</span>
                {sub ? <svg width="5" height="8"><path d="M0 0v8l4.500-4z" /></svg> : null}
              </MenuItem>
            </li>
          ))}
        </MenuList>
      </AppMenu>
      <ViewDialog />
      <ShaftDialog />
      <ArrowSvg>
        <path d="M534 548L380 621" stroke={red} strokeWidth="10" strokeLinecap="round" />
        <path d="M352 634L371 608L384 634Z" fill={red} />
      </ArrowSvg>
    </Desktop>
  );
}
